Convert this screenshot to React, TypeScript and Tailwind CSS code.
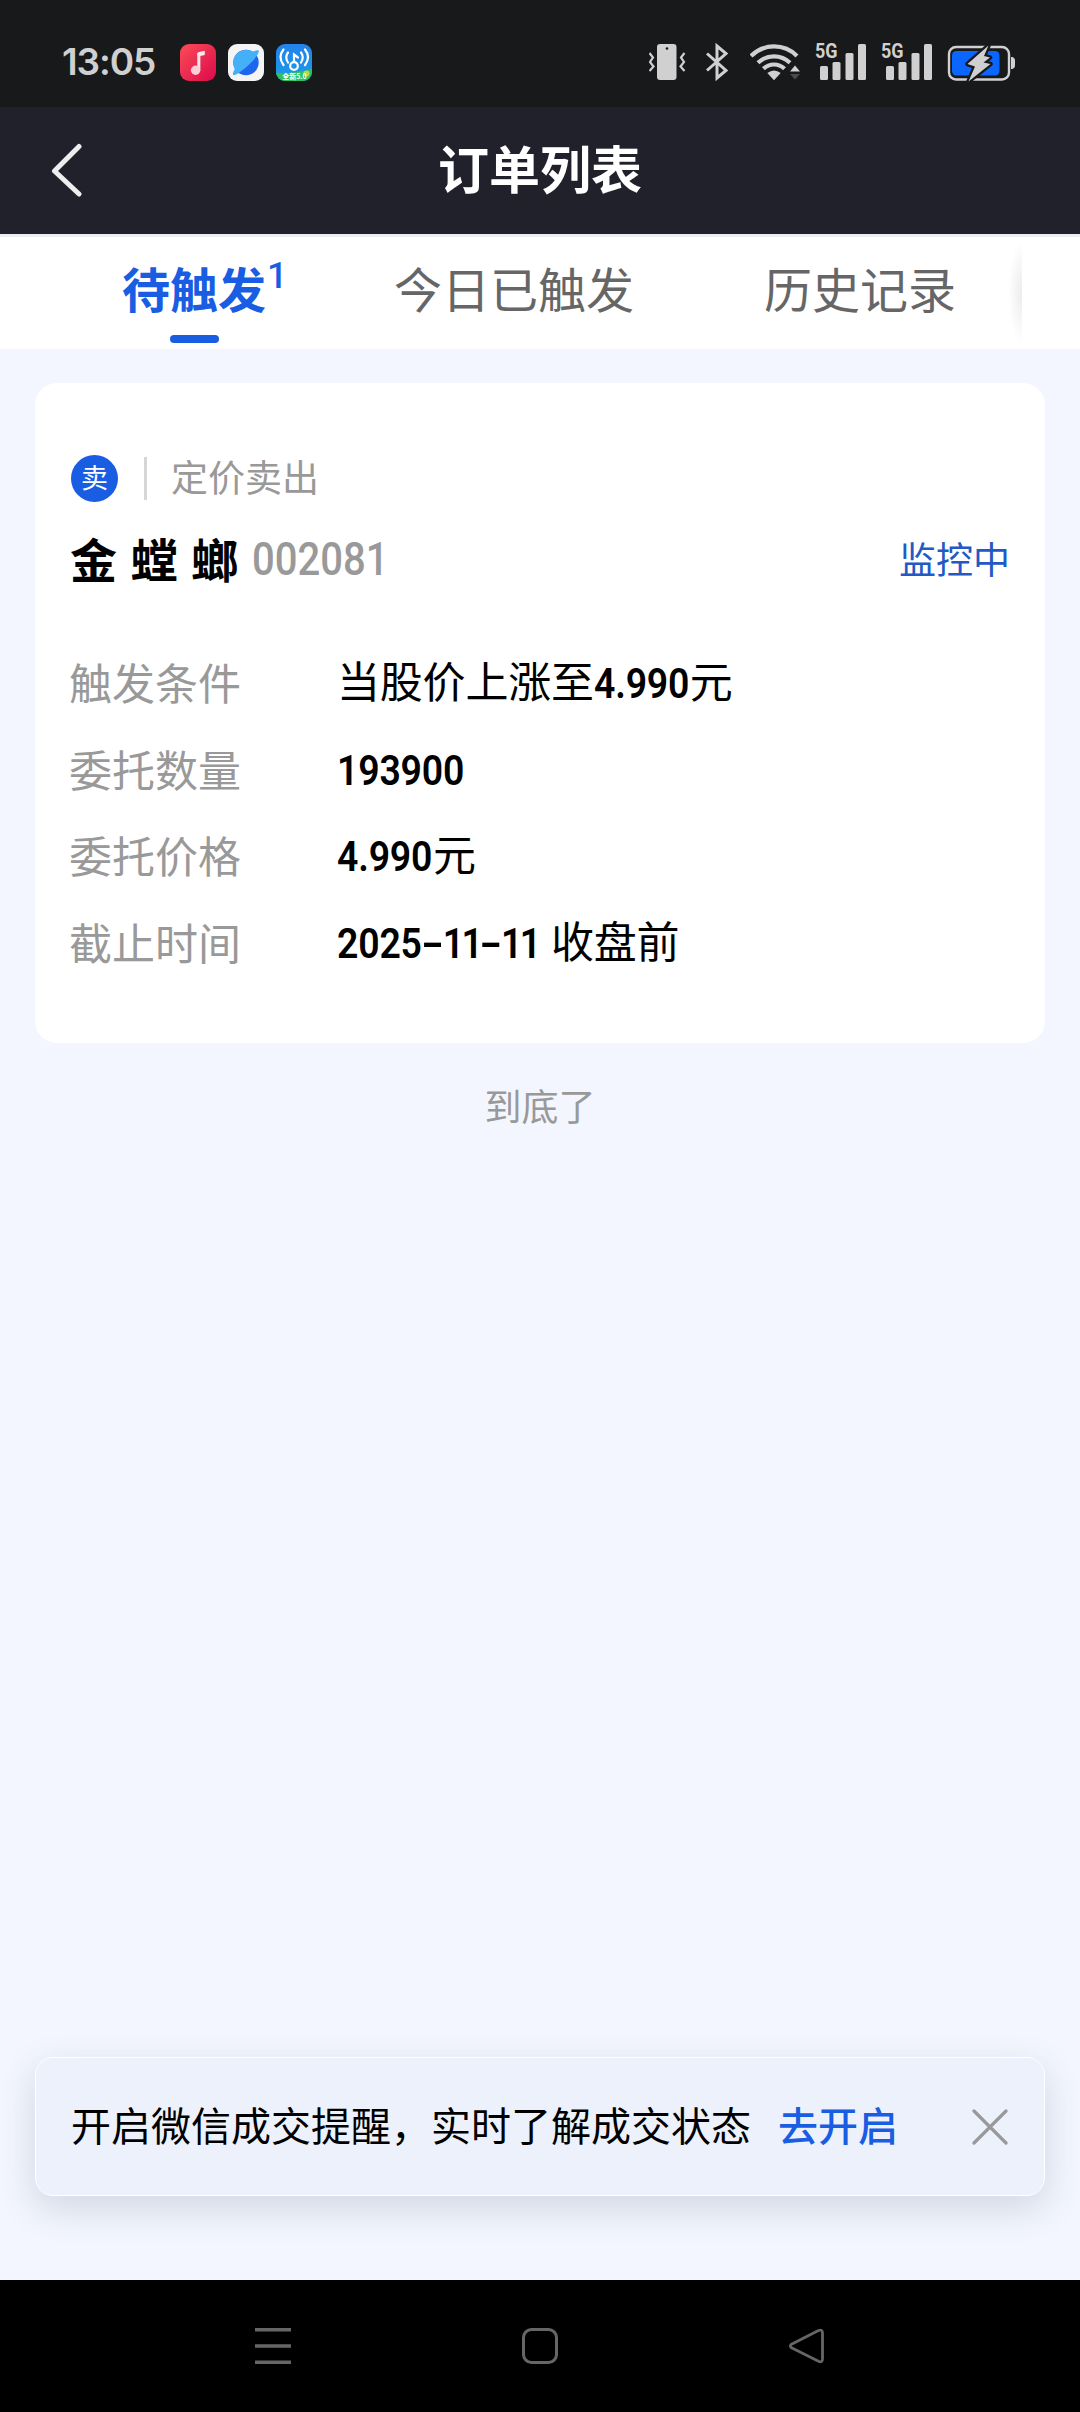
import { Fragment } from 'react'
import type { ReactNode } from 'react'
import clsx from 'clsx'

const TABS = [
  { label: '待触发', count: 1, className: 'ml-[122px]' },
  { label: '今日已触发', className: 'ml-[108px]' },
  { label: '历史记录', className: 'ml-[130px]' },
]

const ROWS = [
  { label: '触发条件', before: '当股价上涨至', num: '4.990', after: '元' },
  { label: '委托数量', num: '193900' },
  { label: '委托价格', num: '4.990', after: '元' },
  { label: '截止时间', num: '2025-11-11', after: '收盘前' },
]

const NUM_WIDTH: Record<string, string> = {
  '4.990': 'w-[96px]',
  '193900': 'w-[129px]',
  '2025-11-11': 'w-[214px]',
}

// Narrow digits with wide hyphens
function Num({ text }: { text: string }) {
  const parts = text.split('-')
  return (
    <span className={clsx('inline-block whitespace-nowrap font-[Roboto] font-semibold', NUM_WIDTH[text])}>
      <span className="inline-block origin-left scale-x-[0.87]">
        {parts.map((part, i) => (
          <Fragment key={i}>
            {i > 0 && (
              <span className="inline-block w-[24px] text-center">
                <span className="inline-block scale-x-[1.7]">-</span>
              </span>
            )}
            <span className={i > 0 ? 'tracking-[-3px]' : ''}>{part}</span>
          </Fragment>
        ))}
      </span>
    </span>
  )
}

function Signal() {
  return (
    <svg className="w-[52px] h-10 overflow-visible" viewBox="0 0 52 40" fill="#d0d0d0">
      <text x="0" y="15.500" fontFamily="Roboto" fontWeight="700" fontSize="20" textLength="22.500" lengthAdjust="spacingAndGlyphs">
        5G
      </text>
      <rect x="5" y="24" width="8" height="14" rx="1.5" />
      <rect x="17.5" y="20" width="8" height="18" rx="1.5" />
      <rect x="30.5" y="11" width="8" height="27" rx="1.5" />
      <rect x="43" y="2" width="8" height="36" rx="1.5" />
    </svg>
  )
}

function AppIcon({ children }: { children: ReactNode }) {
  return (
    <svg className="w-9 h-[37px] rounded-[9px] mr-3" viewBox="0 0 36 37">
      {children}
    </svg>
  )
}

function StatusBar() {
  return (
    <div className="flex items-center h-[107px] shrink-0 bg-[#18191b] pt-[17px] pl-[62px] pr-[65px]">
      <span className="w-[118px] font-[Inter] font-semibold text-[37px] leading-10 tracking-[-1.1px] text-[#d0d0d0]">
        13:05
      </span>
      <AppIcon>
        <defs>
          <linearGradient id="music" x1="0" y1="0" x2="1" y2="1">
            <stop offset="0" stopColor="#fb4c57" />
            <stop offset="1" stopColor="#dc0a4b" />
          </linearGradient>
        </defs>
        <rect width="36" height="37" fill="url(#music)" />
        <path d="M17.5 9.5q0-1.6 1.6-1.6l5.7-1.1v4.1l-4.6 1V26" fill="#fde8ea" />
        <path d="M17.3 9v18h2.9V9z" fill="#fde8ea" />
        <circle cx="15.6" cy="26.3" r="4.7" fill="#fccdd5" />
      </AppIcon>
      <AppIcon>
        <rect width="36" height="37" fill="#f4f4f5" />
        <circle cx="18" cy="18.5" r="12.7" fill="#1f66ee" />
        <path d="M5.3 18.5a12.7 12.7 0 0 1 19.5-10.7q4.7-2.5 5.8-1.2c1.5 2-5 10.3-12.2 16.3S6.4 32.2 5.1 30.7q-1-1.2 1.7-5.8a13 13 0 0 1-1.500-6.400z" fill="#43b0f8" />
      </AppIcon>
      <AppIcon>
        <defs>
          <linearGradient id="cast" x1="0" y1="0" x2="0" y2="1">
            <stop offset="0" stopColor="#2482ec" />
            <stop offset="1" stopColor="#1a9be8" />
          </linearGradient>
        </defs>
        <rect width="36" height="37" fill="url(#cast)" />
        <path d="M0 28.5Q8 30 18 28.5T36 25v12H0z" fill="#2cc35f" />
        <circle cx="30.5" cy="29.5" r="3" fill="#b9d84a" />
        <g fill="none" stroke="#fff" strokeWidth="2.200" strokeLinecap="round">
          <path d="M12 8.500q-3.500 4.500 0 10M7.500 5.500q-6 7.500 0 15.500M25 8.500q3.500 4.500 0 10M29 5.500q6 7.500 0 15.500" />
          <circle cx="18" cy="22" r="3.8" />
          <path d="M18 18V10.500l4 3" />
        </g>
        <text x="18.5" y="35" textAnchor="middle" fontSize="7" fontWeight="700" fill="#fff" fontFamily="Noto Sans CJK SC">
          全新5.0
        </text>
      </AppIcon>

      <div className="ml-auto flex items-center">
        <svg className="w-[37px] h-10" viewBox="0 0 37 40" fill="none" stroke="#d0d0d0" strokeWidth="2.200">
          <rect x="8" y="2" width="19.500" height="36" rx="3" fill="#d0d0d0" stroke="none" />
          <circle cx="18" cy="6.500" r="1.300" fill="#18191b" stroke="none" />
          <path d="M0.500 11l3.500 4.500L1 20l3.500 4.500-4 4.500M35.500 11L32 15.500l3 4.500-3.500 4.500 4 4.500" />
        </svg>
        <svg className="w-[23px] h-10 ml-[20px]" viewBox="0 0 23 40" fill="none" stroke="#d0d0d0" strokeWidth="3">
          <path d="M1 11.500L20 28.500 11 36V4L20 11.500 1 28.500" />
        </svg>
        <svg className="w-[52px] h-10 ml-[21px]" viewBox="0 0 52 40" fill="none" stroke="#d0d0d0" strokeWidth="4.200">
          <path d="M1 14a32.500 32.500 0 0 1 46 0M8 20.800a23 23 0 0 1 32 0M13.500 26.800a15 15 0 0 1 21 0" />
          <path d="M24 38.200l-6.700-7.200q6.700-5 13.400 0z" fill="#d0d0d0" stroke="none" />
          <path d="M45 23.500l5 6H40z" fill="#d0d0d0" stroke="none" />
          <path d="M45 37.500l5-5.500H40z" fill="#4a4b4c" stroke="none" />
        </svg>
        <div className="flex gap-[14px] ml-[13px]">
          <Signal />
          <Signal />
        </div>
        <svg className="w-[68px] h-10 ml-[14px]" viewBox="0 0 68 40">
          <rect x="2" y="5" width="60" height="32.500" rx="7" fill="none" stroke="#d0d0d0" strokeWidth="2.400" />
          <path d="M64 15h1.500q2.500 1 2.500 3v6q0 2-2.500 3H64z" fill="#d0d0d0" />
          <rect x="5" y="9" width="47.500" height="24.500" rx="4.500" fill="#0a66fe" />
          <path
            d="M41.500 3.500L20.500 22l7.500 2.500-6.500 15L43.500 22l-7-1.500 6.500-5-6-1.500z"
            fill="#d0d0d0"
            stroke="#18191b"
            strokeWidth="4.500"
            strokeLinejoin="round"
            paintOrder="stroke"
          />
        </svg>
      </div>
    </div>
  )
}

function TabBar() {
  return (
    <div className="relative flex h-[115px] shrink-0 bg-white border-t-3 border-[#eceef1]">
      {TABS.map((tab, i) => (
        <div
          key={tab.label}
          className={clsx(
            'relative h-full whitespace-nowrap text-[48px] leading-[100px]',
            i === 0 ? 'text-[#195de3] font-bold w-[164px]' : 'text-[#666]',
            tab.className
          )}
        >
          {tab.label}
          {tab.count && (
            <>
              <span className="absolute left-[145px] top-[18px] font-[Roboto] font-medium text-[36px] leading-[42px]">
                {tab.count}
              </span>
              <span className="absolute left-12 bottom-[6px] w-[49px] h-2 rounded-full bg-[#195de3]" />
            </>
          )}
        </div>
      ))}
      <div className="absolute right-0 top-0 h-full w-[58px] bg-white" />
      <div className="absolute right-[58px] top-1 h-[104px] w-[14px] bg-[radial-gradient(ellipse_at_right,#ececec,#ffffff_70%)]" />
    </div>
  )
}

function OrderCard() {
  return (
    <div className="mx-[35px] mt-[34px] h-[660px] shrink-0 rounded-[22px] bg-white px-[35px] pt-[71px]">
      <div className="flex items-center h-12">
        <div className="size-[47px] ml-px rounded-full bg-[#195de3] text-white text-[27px] leading-[44px] text-center">
          卖
        </div>
        <div className="w-[3px] h-[43px] ml-[26px] bg-[#d6d6d6]" />
        <span className="ml-6 text-[37px] leading-12 -mt-1 text-[#999]">定价卖出</span>
      </div>

      <div className="flex items-center justify-between h-[60px] mt-[27px]">
        <div className="flex items-center">
          <h2 className="text-[47px] leading-[60px] font-bold text-black [word-spacing:3px] -mt-[3px]">金 螳 螂</h2>
          <span className="inline-block w-[135px] ml-[14px] font-[Roboto] text-[46px] leading-[60px] font-medium text-[#999]">
            <span className="inline-block origin-left scale-x-[0.87]">002081</span>
          </span>
        </div>
        <span className="text-[37px] leading-[60px] -mt-[2px] text-[#2259c4]">监控中</span>
      </div>

      <div className="mt-[49px]">
        {ROWS.map((row) => (
          <div key={row.label} className="flex h-[86.500px] items-center text-[43px] leading-[84px]">
            <span className="w-[268px] -ml-px text-[#999]">{row.label}</span>
            <span className="text-black whitespace-nowrap tracking-[-0.2px]">
              {row.before}
              <Num text={row.num} />
              {row.after}
            </span>
          </div>
        ))}
      </div>
    </div>
  )
}

function WechatTip() {
  return (
    <div className="flex items-center mx-[35px] mb-[84px] h-[139px] shrink-0 rounded-[18px] border border-white bg-[#edf1fc] pl-[35px] pr-[36px] text-[40px] leading-[60px] shadow-[0_12px_36px_rgba(60,70,100,0.18)]">
      <span className="text-black whitespace-nowrap -mt-[6px]">开启微信成交提醒，实时了解成交状态</span>
      <span className="ml-[27px] -mt-[6px] font-medium text-[#195de3] whitespace-nowrap">去开启</span>
      <svg className="ml-auto w-9 h-9" viewBox="0 0 36 36" stroke="#999" strokeWidth="3.200" strokeLinecap="round">
        <path d="M2 2l32 32M34 2L2 34" />
      </svg>
    </div>
  )
}

export default function App() {
  return (
    <div className="flex flex-col w-[1080px] h-[2412px] overflow-hidden bg-[#f3f6fe] font-['Noto_Sans_CJK_SC',sans-serif]">
      <StatusBar />

      <header className="relative flex items-center justify-center h-[127px] shrink-0 bg-[#20212b]">
        <svg className="absolute left-[50px] top-[36px] w-8 h-[54px]" viewBox="0 0 32 54" fill="none" stroke="#eee" strokeWidth="5" strokeLinecap="round" strokeLinejoin="round">
          <path d="M29 3.500L4.500 28 29 51" />
        </svg>
        <h1 className="text-[51px] leading-[80px] -mt-[7px] font-bold text-white">订单列表</h1>
      </header>

      <TabBar />
      <OrderCard />

      <p className="mt-[32px] text-center text-[37px] leading-[60px] text-[#999]">到底了</p>

      <div className="flex-1" />
      <WechatTip />

      <nav className="flex items-center h-[132px] shrink-0 bg-black px-[255px] justify-between">
        <svg className="w-9 h-9" viewBox="0 0 36 36" stroke="#666" strokeWidth="3.500">
          <path d="M0 1.800h36M0 18h36M0 34.200h36" />
        </svg>
        <svg className="w-9 h-9" viewBox="0 0 36 36" fill="none" stroke="#666" strokeWidth="3">
          <rect x="1.500" y="1.500" width="33" height="33" rx="8" />
        </svg>
        <svg className="w-9 h-9" viewBox="0 0 36 36" fill="none" stroke="#666" strokeWidth="2.800" strokeLinejoin="round">
          <path d="M2.500 16.200L29.500 2.500q4-1.500 4 2.500v26q0 4-4 2.200L2.500 19.800q-2.300-1.800 0-3.600z" />
        </svg>
      </nav>
    </div>
  )
}
